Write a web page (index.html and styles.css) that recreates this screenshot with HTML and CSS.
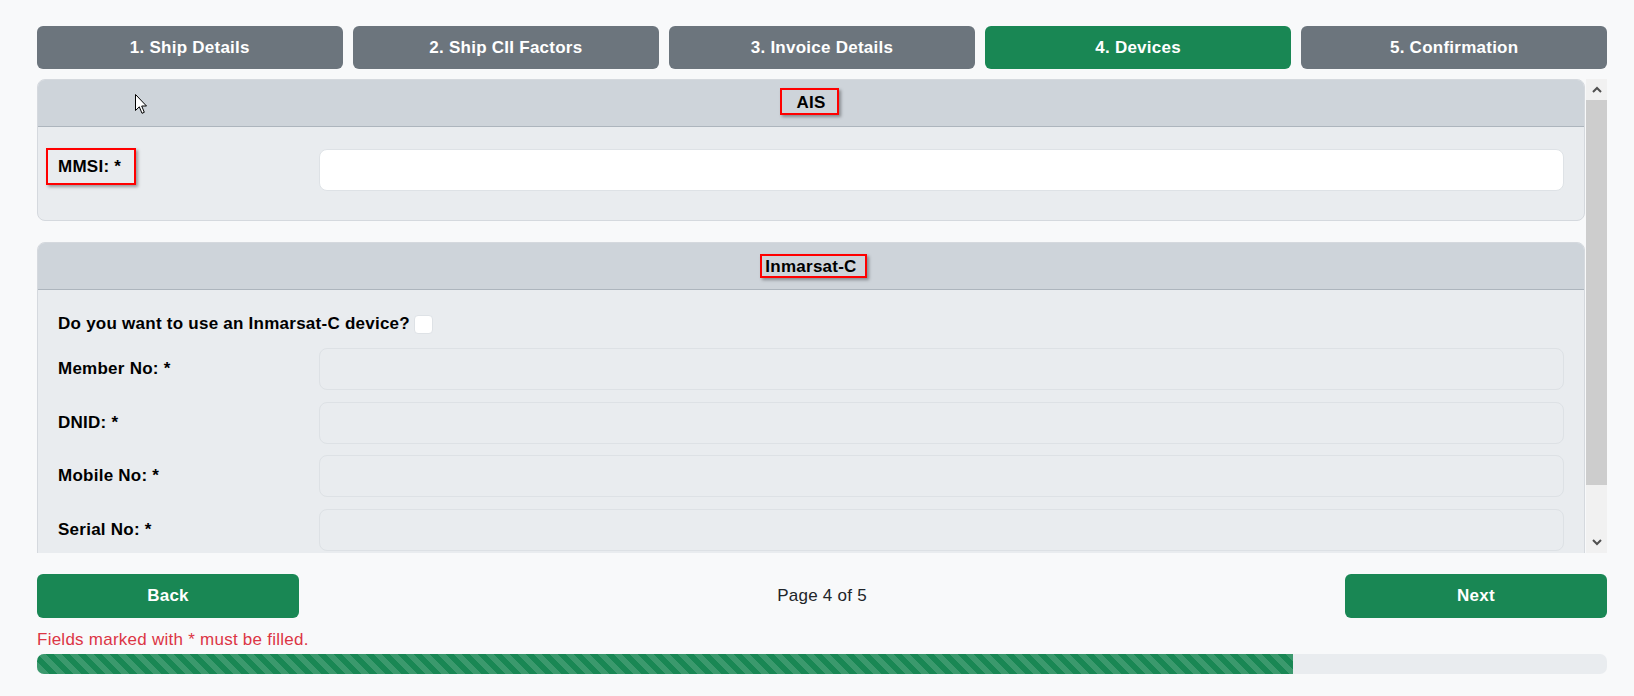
FILE: index.html
```html
<!DOCTYPE html>
<html lang="en">
<head>
<meta charset="utf-8">
<title>Devices</title>
<link rel="stylesheet" href="styles.css">
</head>
<body>
<div class="wizard">
  <nav class="steps">
    <button class="step">1. Ship Details</button>
    <button class="step">2. Ship CII Factors</button>
    <button class="step">3. Invoice Details</button>
    <button class="step step-active">4. Devices</button>
    <button class="step">5. Confirmation</button>
  </nav>

  <div class="scroll-area">
    <div class="scroll-content">
      <section class="card">
        <header class="card-header"><span class="mark mark-ais">AIS</span></header>
        <div class="card-body body-ais">
          <div class="row">
            <label class="label"><span class="mark mark-mmsi">MMSI: *</span></label>
            <input class="field" type="text">
          </div>
        </div>
      </section>

      <section class="card">
        <header class="card-header"><span class="mark mark-inm">Inmarsat-C</span></header>
        <div class="card-body body-inm">
          <div class="question">
            <span class="label">Do you want to use an Inmarsat-C device?</span>
            <input class="check" type="checkbox">
          </div>
          <div class="row">
            <label class="label">Member No: *</label>
            <input class="field" type="text" disabled>
          </div>
          <div class="row">
            <label class="label">DNID: *</label>
            <input class="field" type="text" disabled>
          </div>
          <div class="row">
            <label class="label">Mobile No: *</label>
            <input class="field" type="text" disabled>
          </div>
          <div class="row">
            <label class="label">Serial No: *</label>
            <input class="field" type="text" disabled>
          </div>
        </div>
      </section>
    </div>
    <div class="scrollbar">
      <div class="sb-btn">
        <svg width="10" height="7" viewBox="0 0 10 7"><path d="M1 6 L5 2 L9 6" fill="none" stroke="#505050" stroke-width="2"/></svg>
      </div>
      <div class="sb-track"><div class="sb-thumb"></div></div>
      <div class="sb-btn">
        <svg width="10" height="7" viewBox="0 0 10 7"><path d="M1 1 L5 5 L9 1" fill="none" stroke="#505050" stroke-width="2"/></svg>
      </div>
    </div>
  </div>

  <div class="nav-row">
    <button class="nav-btn">Back</button>
    <span class="page-info">Page 4 of 5</span>
    <button class="nav-btn">Next</button>
  </div>
  <p class="note">Fields marked with * must be filled.</p>
  <div class="progress"><div class="progress-bar" style="width:80%"></div></div>
</div>

<svg class="cursor" width="13" height="21" viewBox="0 0 13 21">
  <path d="M0.5 0.5 L0.5 16.5 L4.3 12.8 L7 19.3 L9.3 18.3 L6.7 12 L11.5 12 Z" fill="#fff" stroke="#000" stroke-width="1" stroke-linejoin="round"/>
</svg>
</body>
</html>
```

FILE: styles.css
```css
* { box-sizing: border-box; }

html, body {
  margin: 0;
  padding: 0;
  background: #f8f9fa;
  font-family: "Liberation Sans", Arial, sans-serif;
  font-size: 17px;
  letter-spacing: 0.25px;
  color: #111;
}

body {
  position: relative;
  width: 1634px;
  height: 696px;
  overflow: hidden;
}

.wizard {
  padding: 26px 27px 0 37px;
}

/* steps */
.steps {
  display: flex;
  gap: 10.5px;
}

.step {
  flex: 1;
  height: 43px;
  border: none;
  border-radius: 6px;
  background: #6c757d;
  color: #fff;
  font-family: inherit;
  font-size: 17px;
  letter-spacing: 0.25px;
  font-weight: bold;
  padding: 0;
}

.step-active {
  background: #198754;
}

/* scroll area */
.scroll-area {
  margin-top: 10px;
  height: 474px;
  display: flex;
}

.scroll-content {
  flex: 1;
  overflow: hidden;
  padding-right: 1px;
}

.scrollbar {
  width: 21px;
  display: flex;
  flex-direction: column;
  background: #f1f1f1;
}

.sb-btn {
  height: 21px;
  display: flex;
  align-items: center;
  justify-content: center;
  background: #f1f1f1;
}

.sb-track {
  flex: 1;
}

.sb-thumb {
  height: 385px;
  background: #cdcdcd;
}

/* cards */
.card {
  border: 1px solid #d5d9de;
  border-radius: 8px;
  overflow: hidden;
  background: #e9ecef;
  margin-bottom: 21px;
}

.card-header {
  height: 47px;
  background: #ced4da;
  border-bottom: 1px solid #adb5bd;
  display: flex;
  align-items: center;
  justify-content: center;
  font-weight: bold;
  color: #000;
}

.card-body {
  padding: 0 20px;
}

.body-ais {
  padding-top: 22px;
  padding-bottom: 29px;
}

.body-inm {
  padding-top: 22px;
  padding-bottom: 40px;
}

.row {
  display: grid;
  grid-template-columns: 261px 1fr;
  align-items: center;
  margin-bottom: 11.67px;
}

.body-ais .row {
  margin-bottom: 0;
}

.label {
  font-weight: bold;
  color: #000;
}

.field {
  height: 42px;
  width: 100%;
  border: 1px solid #dee2e6;
  border-radius: 8px;
  background: #fff;
  font: inherit;
  padding: 0 12px;
}

.field:disabled {
  background: #e9ecef;
  border-color: #dde1e5;
}

.question {
  display: flex;
  align-items: center;
  height: 24px;
  margin-bottom: 12px;
}

.check {
  appearance: none;
  -webkit-appearance: none;
  width: 19px;
  height: 19px;
  margin: 0 0 0 4px;
  background: #fff;
  border: 1px solid #dee2e6;
  border-radius: 4px;
}

/* annotation boxes */
.mark {
  display: inline-block;
  border: 2px solid #ff0000;
  box-shadow: 2px 2px 3px rgba(0, 0, 0, 0.35);
  line-height: 19px;
}

.mark-ais {
  padding: 3px 11px 1px 14px;
  margin-top: -3px;
  margin-right: 3px;
}

.mark-inm {
  padding: 1px 8px 0 3px;
  margin-left: 5px;
}

.mark-mmsi {
  padding: 7px 13px 7px 10px;
  margin-left: -12px;
  margin-top: -7px;
}

/* bottom nav */
.nav-row {
  margin-top: 21px;
  display: grid;
  grid-template-columns: 262px 1fr 262px;
  align-items: center;
}

.nav-btn {
  height: 44px;
  border: none;
  border-radius: 6px;
  background: #198754;
  color: #fff;
  font-family: inherit;
  font-size: 17px;
  letter-spacing: 0.25px;
  font-weight: bold;
  padding: 0;
}

.page-info {
  text-align: center;
  color: #212529;
}

.note {
  margin: 12px 0 0;
  color: #dc3545;
  line-height: 20px;
}

.progress {
  margin-top: 4px;
  height: 20px;
  border-radius: 7px;
  background: #e9ecef;
  overflow: hidden;
}

.progress-bar {
  height: 100%;
  background-color: #198754;
  background-image: linear-gradient(45deg,
    rgba(255, 255, 255, 0.15) 25%, transparent 25%,
    transparent 50%, rgba(255, 255, 255, 0.15) 50%,
    rgba(255, 255, 255, 0.15) 75%, transparent 75%, transparent);
  background-size: 16px 16px;
}

.cursor {
  position: absolute;
  left: 135px;
  top: 94px;
}
```
